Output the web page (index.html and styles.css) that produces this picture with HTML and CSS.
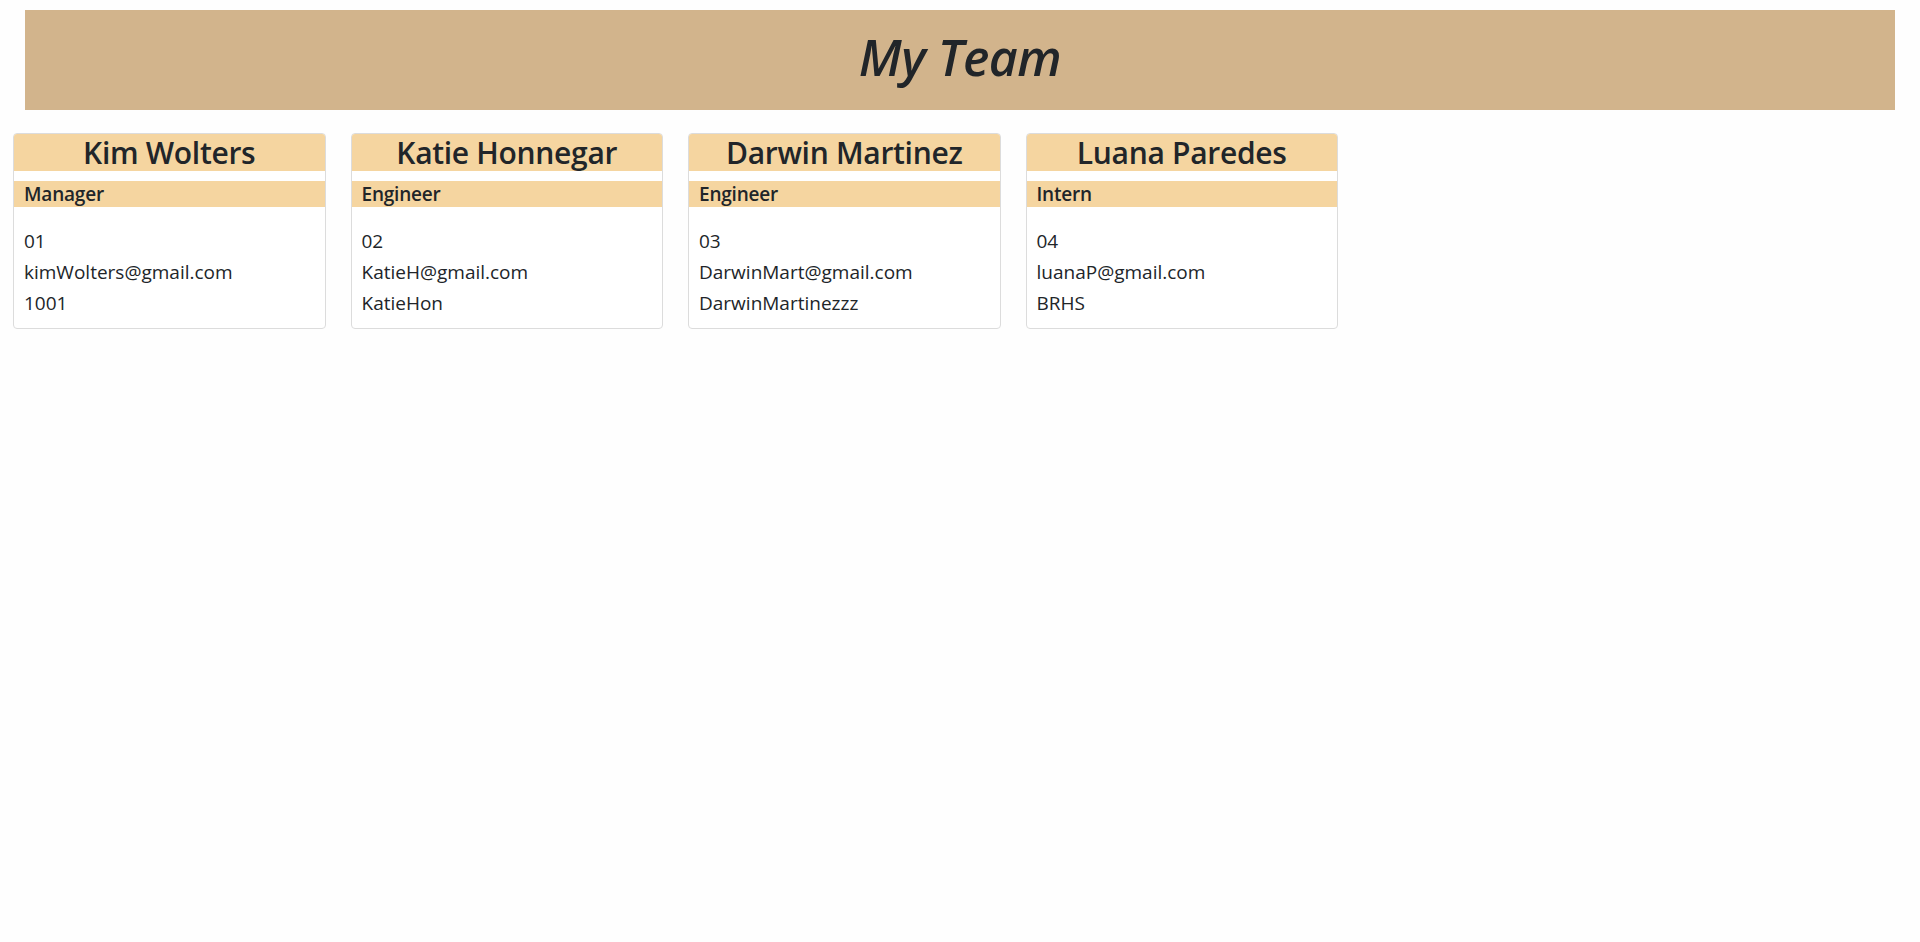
FILE: index.html
```html
<!DOCTYPE html>
<html lang="en">
<head>
<meta charset="utf-8">
<title>My Team</title>
<link rel="stylesheet" href="styles.css">
</head>
<body>
  <header class="banner">
    <h1 class="banner-title">My Team</h1>
  </header>
  <main class="team">
    <section class="card">
      <h2 class="card-name">Kim Wolters</h2>
      <h5 class="card-role">Manager</h5>
      <div class="card-body">
        <p class="card-line">01</p>
        <p class="card-line">kimWolters@gmail.com</p>
        <p class="card-line">1001</p>
      </div>
    </section>
    <section class="card">
      <h2 class="card-name">Katie Honnegar</h2>
      <h5 class="card-role">Engineer</h5>
      <div class="card-body">
        <p class="card-line">02</p>
        <p class="card-line">KatieH@gmail.com</p>
        <p class="card-line">KatieHon</p>
      </div>
    </section>
    <section class="card">
      <h2 class="card-name">Darwin Martinez</h2>
      <h5 class="card-role">Engineer</h5>
      <div class="card-body">
        <p class="card-line">03</p>
        <p class="card-line">DarwinMart@gmail.com</p>
        <p class="card-line">DarwinMartinezzz</p>
      </div>
    </section>
    <section class="card">
      <h2 class="card-name">Luana Paredes</h2>
      <h5 class="card-role">Intern</h5>
      <div class="card-body">
        <p class="card-line">04</p>
        <p class="card-line">luanaP@gmail.com</p>
        <p class="card-line">BRHS</p>
      </div>
    </section>
  </main>
</body>
</html>
```
FILE: styles.css
```css
html, body {
  margin: 0;
  padding: 0;
  background: #fefefe;
}

body {
  font-family: "Segoe UI", "Open Sans", "Noto Sans", sans-serif;
  color: #212529;
  padding-top: 10px;
}

.banner {
  margin: 0 25px;
  height: 100px;
  background: #d2b48c;
  display: flex;
  align-items: center;
  justify-content: center;
}

.banner-title {
  margin: 0 0 6px;
  font-size: 50px;
  font-style: italic;
  font-weight: 600;
  line-height: 1.2;
  letter-spacing: -0.5px;
}

.team {
  display: flex;
  gap: 25px;
  padding: 23px 13px 0;
}

.card {
  width: 312.5px;
  box-sizing: border-box;
  border: 1px solid #dcdcdc;
  border-radius: 4px;
  overflow: hidden;
  background: #fff;
}

.card-name {
  margin: 0 0 10px;
  background: #f5d5a0;
  text-align: center;
  font-size: 30px;
  font-weight: 600;
  line-height: 37px;
  letter-spacing: -0.3px;
}

.card-role {
  margin: 0;
  background: #f5d5a0;
  padding: 0 10px;
  font-size: 19px;
  font-weight: 600;
  line-height: 26px;
  letter-spacing: -0.2px;
}

.card-body {
  padding: 19px 10px 9px;
}

.card-line {
  margin: 0;
  font-size: 19px;
  line-height: 31px;
}
```
